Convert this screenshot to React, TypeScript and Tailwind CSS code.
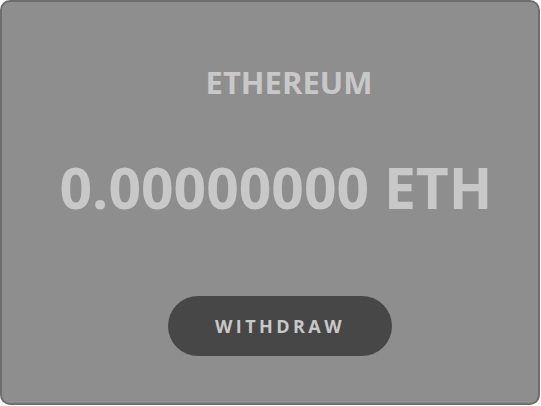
export default function App() {
  return (
    <div className="w-[541px] h-[406px] bg-white" style={{ fontFamily: '"Open Sans", sans-serif' }}>
      <div className="w-[540px] h-[405px] rounded-[10px] border-2 border-[#6e6e6e] bg-[#8e8e8e] flex flex-col items-center pt-[60px]">
        <h2 className="ml-[38px] text-[31px] leading-[40px] font-bold text-[#c8c8c8]">ETHEREUM</h2>
        <p className="ml-[12px] mt-[45px] text-[57px] leading-[80px] font-bold text-[#c8c8c8]">0.00000000 ETH</p>
        <button className="ml-[20px] mt-[69px] w-[224px] h-[60px] rounded-full bg-[#474747] text-[18px] font-bold tracking-[0.19em] text-[#c8c8c8]">
          WITHDRAW
        </button>
      </div>
    </div>
  );
}
